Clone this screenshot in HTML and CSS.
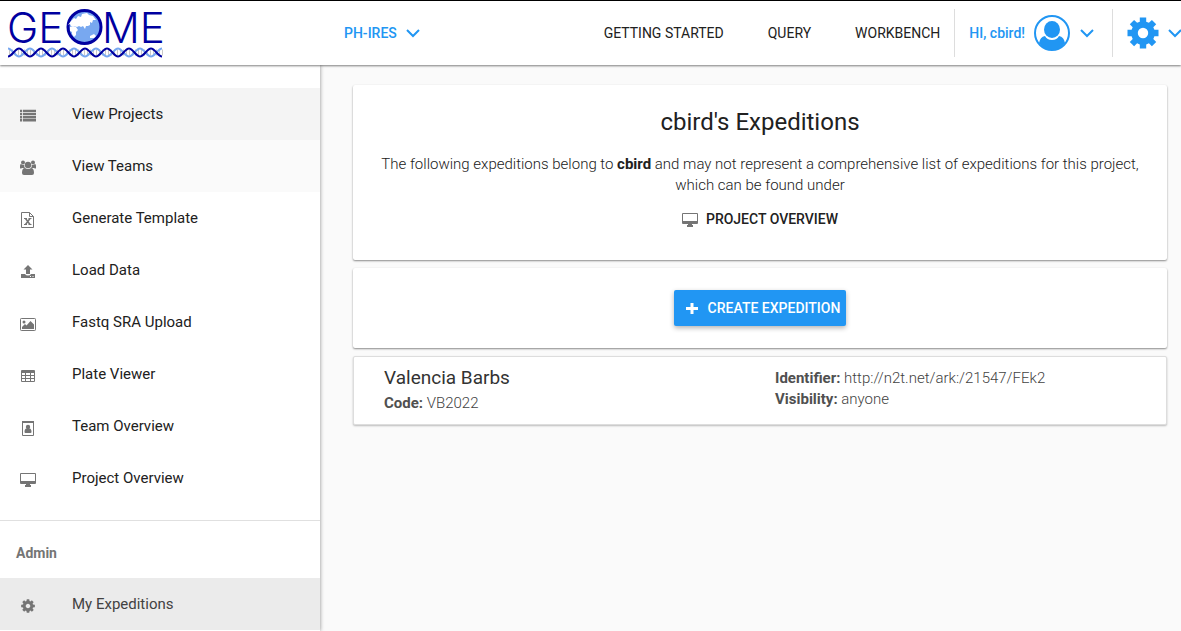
FILE: index.html
```html
<!DOCTYPE html>
<html lang="en">
<head>
<meta charset="utf-8">
<title>GEOME - My Expeditions</title>
<link rel="stylesheet" href="styles.css">
</head>
<body>
<svg class="defs" aria-hidden="true">
  <symbol id="list" viewBox="0 0 16 16"><path d="M0 1.800h2.200v2.400H0zM3 1.800h13v2.400H3zM0 4.900h2.200v2.400H0zM3 4.900h13v2.400H3zM0 8h2.200v2.400H0zM3 8h13v2.400H3zM0 11.100h2.200v2.400H0zM3 11.100h13v2.400H3z"/></symbol>
  <symbol id="users" viewBox="0 0 16 16"><circle cx="3" cy="2.500" r="2"/><circle cx="13" cy="2.500" r="2"/><circle cx="8" cy="5" r="3.200"/><path d="M0 8V6q0-2 1-2 2 1.300 3.300.7Q4 7 5 8H2Q0 9 0 8zM16 8V6q0-2-1-2-2 1.300-3.300.7Q12 7 11 8h3q2 1 2 0zM2 13q0-5 3-5 3 2 6 0 3 0 3 5 0 2-2 2H4q-2 0-2-2z"/></symbol>
  <symbol id="excel" viewBox="0 0 16 16"><path fill="none" stroke="currentColor" d="M1.500.5h8l4 4v11h-12zM9.500.5v4h4"/><path fill="none" stroke="currentColor" d="M4 6.500h3M8.500 6.500h3M4 12.500h3M8.500 12.500h3"/><path fill="none" stroke="currentColor" stroke-width="1.500" d="M5.500 6.500l4.500 6M10 6.500l-4.500 6"/></symbol>
  <symbol id="upload" viewBox="0 0 16 16"><path d="M8 1l4.500 4.500H10V10H6V5.500H3.500zM1 10h4q1 1.500 3 1.500T11 10h4v4H1z"/><path fill="#fff" d="M10 12h1v1h-1zM12.500 12h1v1h-1z"/></symbol>
  <symbol id="image" viewBox="0 0 16 16"><rect x=".5" y="2.500" width="15" height="12" rx=".8" fill="none" stroke="currentColor"/><circle cx="4" cy="6" r="1.500"/><path d="M2 13v-2l3-3 1.500 1.500L10.500 5 14 8.500V13z"/></symbol>
  <symbol id="table" viewBox="0 0 16 16"><path fill-rule="evenodd" d="M2 2h12q1 0 1 1v10q0 1-1 1H2q-1 0-1-1V3q0-1 1-1zM2 5v2h3V5zM6 5v2h4V5zM11 5v2h3V5zM2 8v2h3V8zM6 8v2h4V8zM11 8v2h3V8zM2 11v2h3v-2zM6 11v2h4v-2zM11 11v2h3v-2z"/></symbol>
  <symbol id="badge" viewBox="0 0 16 16"><path fill="none" stroke="currentColor" d="M2.500 1.500h11v14h-11z"/><path d="M2 1h3v1h2V1h2v1h2V1h3v2H2z"/><circle cx="8" cy="7" r="2.200"/><path d="M4.500 12q0-3.500 2-3.500 1.500 1 3 0 2 0 2 3.500 0 1-1 1h-5q-1 0-1-1z"/></symbol>
  <symbol id="desktop" viewBox="0 0 16 16"><path fill-rule="evenodd" d="M1 1h14q1 0 1 1v9q0 1-1 1h-5v1h1v2H5v-2h1v-1H1q-1 0-1-1V2q0-1 1-1zM1 2v7h14V2z"/></symbol>
  <symbol id="cog" viewBox="0 0 1792 1792"><path d="M1152 896q0-106-75-181t-181-75-181 75-75 181 75 181 181 75 181-75 75-181zm512-109v222q0 12-8 23t-20 13l-185 28q-19 54-39 91 35 50 107 138 10 12 10 25t-9 23q-27 37-99 108t-94 71q-12 0-26-9l-138-108q-44 23-91 38-16 136-29 186-7 28-36 28h-222q-14 0-24.500-8.500t-11.500-21.500l-28-184q-49-16-90-37l-141 107q-10 9-25 9-14 0-25-11-126-114-165-168-7-10-7-23 0-12 8-23 15-21 51-66.500t54-70.500q-27-50-41-99l-183-27q-13-2-21-12.500t-8-23.500v-222q0-12 8-23t19-13l186-28q14-46 39-92-40-57-107-138-10-12-10-24 0-10 9-23 26-36 98.500-107.500t94.500-71.500q13 0 26 10l138 107q44-23 91-38 16-136 29-186 7-28 36-28h222q14 0 24.500 8.500t11.500 21.500l28 184q49 16 90 37l142-107q9-9 24-9 13 0 25 10 129 119 165 170 7 8 7 22 0 12-8 23-15 21-51 66.500t-54 70.500q26 50 41 98l183 28q13 2 21 12.500t8 23.500z"/></symbol>
  <symbol id="chevron" viewBox="0 0 16 16"><path d="M2 5l6 6 6-6" fill="none" stroke="currentColor" stroke-width="2"/></symbol>
  <symbol id="plus" viewBox="0 0 16 16"><path d="M6.500 3h3v4H14v3H9.500v4h-3v-4H2V7h4.500z"/></symbol>
</svg>

<header class="topbar">
  <a class="logo" href="#" aria-label="GEOME home">
    <svg width="156" height="48" viewBox="8 9 156 48">
      <g class="logo-text"><text x="7" y="43">GE</text><text x="102" y="43">ME</text></g>
      <circle cx="84.500" cy="27" r="16.500" fill="#78a8f0" stroke="#0000a0" stroke-width="3"/>
      <path fill="#fff" d="M71 21l3-3 2 1 2-3 3 1 1-3 5-1 2 2 4 1 3 4-3 0-1 3-2-1 0 3-2 1-2 0-1 3-2-3-2 1-2-1-2 1-3-1-3 0-1-2-2 1zM70 27l3-1 3 1 2 3-2 2 0 3-2 2-2-3 0-2-2-1zM90 36l2-1 2-1 2 2-2 2-4 0z"/>
      <path stroke="#c8c8c8" stroke-width="6" stroke-dasharray="1 2" d="M9 52.500h154"/>
      <path fill="none" stroke="#78a8f0" stroke-width="2" d="M8 48.500c4 0 7 8 11 8s7-8 11-8 7 8 11 8 7-8 11-8 7 8 11 8 7-8 11-8 7 8 11 8 7-8 11-8 7 8 11 8 7-8 11-8 7 8 11 8 7-8 11-8 7 8 11 8 7-8 11-8"/>
      <path fill="none" stroke="#0000a0" stroke-width="2" d="M8 56.500c4 0 7-8 11-8s7 8 11 8 7-8 11-8 7 8 11 8 7-8 11-8 7 8 11 8 7-8 11-8 7 8 11 8 7-8 11-8 7 8 11 8 7-8 11-8 7 8 11 8 7-8 11-8 7 8 11 8"/>
    </svg>
  </a>
  <button class="project">PH-IRES <svg class="icon"><use href="#chevron"/></svg></button>
  <nav class="links">
    <a href="#">GETTING STARTED</a>
    <a href="#">QUERY</a>
    <a href="#">WORKBENCH</a>
  </nav>
  <button class="account">HI, cbird!
    <svg class="avatar" viewBox="0 0 36 36"><circle cx="18" cy="18" r="17" fill="none" stroke="currentColor" stroke-width="2"/><ellipse cx="18" cy="14.500" rx="8" ry="8.500"/><path d="M5 28q1-6 6-7 2 4 7 4t7-4q5 1 6 7-5 7-13 7T5 28z"/></svg>
    <svg class="icon"><use href="#chevron"/></svg>
  </button>
  <button class="settings" aria-label="Settings">
    <svg class="gear" viewBox="0 0 32 32"><path fill-rule="evenodd" d="M12.800.5h6.400v4.200l2.700 1.100 3-2.900 4.300 4.300-2.900 3 1.100 2.600h4.100v6.400h-4.100l-1.100 2.700 2.900 3-4.300 4.300-3-2.900-2.700 1.100v4.100h-6.400v-4.100l-2.700-1.100-3 2.900-4.300-4.300 2.900-3-1.100-2.700H.5v-6.400h4.100l1.100-2.600-2.900-3 4.300-4.300 3 2.900 2.700-1.100zM16 10.800a5.200 5.200 0 1 0 0 10.400 5.200 5.200 0 0 0 0-10.400z"/></svg>
    <svg class="icon"><use href="#chevron"/></svg>
  </button>
</header>

<div class="layout">
  <aside class="sidebar">
    <nav class="menu">
      <a class="focused" href="#"><svg class="icon"><use href="#list"/></svg><span>View Projects</span></a>
      <a class="hovered" href="#"><svg class="icon"><use href="#users"/></svg><span>View Teams</span></a>
      <a href="#"><svg class="icon"><use href="#excel"/></svg><span>Generate Template</span></a>
      <a href="#"><svg class="icon"><use href="#upload"/></svg><span>Load Data</span></a>
      <a href="#"><svg class="icon"><use href="#image"/></svg><span>Fastq SRA Upload</span></a>
      <a href="#"><svg class="icon"><use href="#table"/></svg><span>Plate Viewer</span></a>
      <a href="#"><svg class="icon"><use href="#badge"/></svg><span>Team Overview</span></a>
      <a href="#"><svg class="icon"><use href="#desktop"/></svg><span>Project Overview</span></a>
    </nav>
    <h2 class="group">Admin</h2>
    <nav class="menu">
      <a class="active" href="#"><svg class="icon"><use href="#cog"/></svg><span>My Expeditions</span></a>
    </nav>
  </aside>

  <main class="content">
    <section class="card intro">
      <h1>cbird's Expeditions</h1>
      <p>The following expeditions belong to <b>cbird</b> and may not represent a comprehensive list of expeditions for this project, which can be found under</p>
      <a class="overview" href="#"><svg class="icon"><use href="#desktop"/></svg>PROJECT OVERVIEW</a>
    </section>
    <section class="card create">
      <button class="primary"><svg class="icon"><use href="#plus"/></svg>CREATE EXPEDITION</button>
    </section>
    <article class="card expedition">
      <div>
        <h3>Valencia Barbs</h3>
        <p><b>Code:</b> VB2022</p>
      </div>
      <div class="details">
        <p><b>Identifier:</b> http://n2t.net/ark:/21547/FEk2</p>
        <p><b>Visibility:</b> anyone</p>
      </div>
    </article>
  </main>
</div>
</body>
</html>
```
FILE: styles.css
```css
* { box-sizing: border-box; }

body {
  margin: 0;
  min-height: 100vh;
  display: flex;
  flex-direction: column;
  overflow-x: hidden;
  background: #fafafa;
  color: #212121;
  font: 300 15px/21px Roboto, sans-serif;
}

h1, h2, h3, p { margin: 0; }
b { font-weight: 700; }
a { color: inherit; text-decoration: none; }
svg { display: block; flex: none; fill: currentColor; }
button { padding: 0; border: 0; background: none; color: inherit; font: inherit; cursor: pointer; }
.defs { position: absolute; width: 0; height: 0; }
.icon { width: 16px; height: 16px; }

.topbar {
  position: relative;
  z-index: 2;
  display: flex;
  align-items: center;
  padding: 8px 0;
  border-top: 1px solid #000;
  background: #fff;
  box-shadow: 0 1px 2px rgba(0, 0, 0, .5);
  font-size: 14px;
  font-weight: 400;
}
.logo { padding-left: 8px; }
.logo svg { overflow: visible; }
.logo-text { fill: #0000a0; font: 300 42px Inter, sans-serif; }
.project { display: flex; align-items: center; gap: 8px; margin-left: 180px; color: #2196f3; font-weight: 500; }
.links { display: flex; gap: 44px; margin-left: auto; padding-right: 14px; }
.account, .settings {
  display: flex;
  align-items: center;
  align-self: stretch;
  border-left: 1px solid #ddd;
  padding-left: 14px;
  color: #2196f3;
  font-weight: 500;
}
.account { gap: 9px; padding-right: 17px; }
.settings { gap: 8px; margin-right: -2px; }
.avatar { width: 36px; height: 36px; }
.gear { width: 32px; height: 32px; }

.layout { flex: 1; display: flex; }

.sidebar {
  flex: none;
  width: 320px;
  padding-top: 23px;
  background: #fff;
  box-shadow: 0 0 4px rgba(0, 0, 0, .45);
}
.menu a {
  display: flex;
  align-items: center;
  gap: 36px;
  height: 52px;
  padding: 4px 20px 0;
  font-weight: 400;
}
.menu .icon { color: #757575; }
.menu span { padding-bottom: 4px; }
.menu .focused { background: #f4f4f4; }
.menu .hovered { background: #fafafa; }
.menu .active { background: #ebebeb; color: #424242; }
.group {
  margin-top: 16px;
  padding: 22px 16px 14px;
  border-top: 1px solid #e0e0e0;
  color: #757575;
  font-size: 14px;
  font-weight: 700;
}

.content { flex: 1; display: flex; flex-direction: column; gap: 8px; padding: 20px 14px 20px 33px; }
.card { border-radius: 2px; background: #fff; box-shadow: 0 1px 2px rgba(0, 0, 0, .45); }
.intro { padding: 21px 20px 30px; text-align: center; }
.intro h1 { margin-bottom: 16px; font-size: 24px; line-height: 32px; font-weight: 400; }
.overview { display: flex; justify-content: center; align-items: center; gap: 8px; margin-top: 13px; font-size: 14px; font-weight: 500; }
.overview .icon { color: #757575; }
.create { display: flex; justify-content: center; padding: 22px; }
.primary {
  display: flex;
  align-items: center;
  gap: 8px;
  height: 36px;
  padding: 0 6px 0 10px;
  border-radius: 2px;
  background: #2196f3;
  box-shadow: 0 2px 5px rgba(0, 0, 0, .3);
  color: #fff;
  font-size: 14px;
  font-weight: 500;
}
.expedition {
  display: grid;
  grid-template-columns: 1fr 1fr;
  padding: 9px 0 10px 30px;
  border: 1px solid #ddd;
  box-shadow: 0 1px 2px rgba(0, 0, 0, .25);
  color: #424242;
}
.expedition h3 { padding-bottom: 3px; color: #333; font-size: 19px; line-height: 24px; font-weight: 400; }
.expedition b { color: #505050; }
.details { padding-top: 2px; }
```
